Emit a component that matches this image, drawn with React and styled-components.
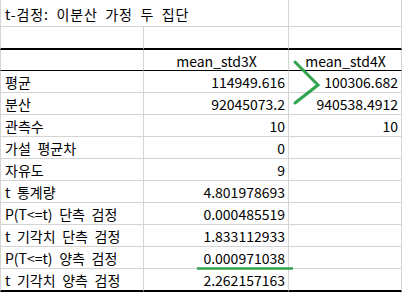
import React from "react";
import styled, { createGlobalStyle } from "styled-components";

const Global = createGlobalStyle`
  html, body { margin: 0; padding: 0; background: #fff; }
  body { font-family: "Noto Sans CJK KR", "Noto Sans", sans-serif; }
`;

const Sheet = styled.div`
  position: relative;
  width: 403px;
  height: 295px;
  overflow: hidden;
  background: #fff;
  color: #000;
  font-size: 14px;
`;

const Row = styled.div`
  display: grid;
  grid-template-columns: 144px 145px 113px;
  height: ${(p) => p.$h}px;
`;

const Cell = styled.div`
  box-sizing: border-box;
  display: flex;
  align-items: center;
  justify-content: ${(p) => (p.$align === "right" ? "flex-end" : p.$align === "center" ? "center" : "flex-start")};
  padding: 1px 3px 0 4px;
  border-right: 1px solid #d4d4d4;
  border-bottom: ${(p) =>
    p.$bottom === "thick" ? "2px solid #000" : p.$bottom === "thin" ? "1px solid #000" : "1px solid #d4d4d4"};
  border-left: ${(p) => (p.$first ? "1px solid #d4d4d4" : "none")};
  grid-column: ${(p) => (p.$span ? `span ${p.$span}` : "auto")};
  white-space: pre;
  line-height: 1;
  font-size: 14px;
  word-spacing: ${(p) => (p.$label ? "3.5px" : "0")};
  letter-spacing: ${(p) => (p.$title ? "0.9px" : "0")};
`;

const Overlay = styled.svg`
  position: absolute;
  left: 0;
  top: 0;
  pointer-events: none;
`;

const rows = [
  ["평균", "114949.616", "100306.682"],
  ["분산", "92045073.2", "940538.4912"],
  ["관측수", "10", "10"],
  ["가설 평균차", "0", ""],
  ["자유도", "9", ""],
  ["t 통계량", "4.801978693", ""],
  ["P(T<=t) 단측 검정", "0.000485519", ""],
  ["t 기각치 단측 검정", "1.833112933", ""],
  ["P(T<=t) 양측 검정", "0.000971038", ""],
  ["t 기각치 양측 검정", "2.262157163", ""],
];

export default function App() {
  return (
    <>
      <Global />
      <Sheet>
        <Row $h={27}>
          <Cell $first $label $title $span={2}>t-검정: 이분산 가정 두 집단</Cell>
          <Cell />
        </Row>
        <Row $h={23}>
          <Cell $first $bottom="thick" />
          <Cell $bottom="thick" />
          <Cell $bottom="thick" />
        </Row>
        <Row $h={21}>
          <Cell $first $bottom="thin" />
          <Cell $bottom="thin" $align="center">mean_std3X</Cell>
          <Cell $bottom="thin" $align="center">mean_std4X</Cell>
        </Row>
        {rows.map((r, i) => {
          const last = i === rows.length - 1;
          return (
            <Row key={r[0]} $h={last ? 23 : 22}>
              <Cell $first $label $bottom={last ? "thick" : undefined}>{r[0]}</Cell>
              <Cell $align="right" $bottom={last ? "thick" : undefined}>{r[1]}</Cell>
              <Cell $align="right" $bottom={last ? "thick" : undefined}>{r[2]}</Cell>
            </Row>
          );
        })}
        <Overlay width="403" height="295" viewBox="0 0 403 295">
          <polyline
            points="295,62 318,85 295,103"
            fill="none"
            stroke="#2ea44f"
            strokeWidth="3"
            strokeLinecap="round"
            strokeLinejoin="miter"
          />
          <line x1="197" y1="268.5" x2="293" y2="268.5" stroke="#2ea44f" strokeWidth="2.5" />
        </Overlay>
      </Sheet>
    </>
  );
}
